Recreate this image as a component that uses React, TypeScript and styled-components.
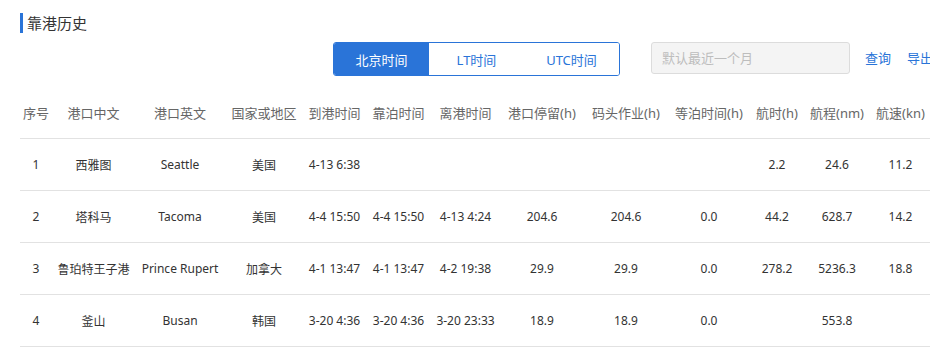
import React, { useState } from "react";
import styled, { createGlobalStyle } from "styled-components";

const Global = createGlobalStyle`
  html, body { margin: 0; padding: 0; background: #fff; overflow: hidden; }
  body { font-family: "Noto Sans", "Noto Sans CJK SC", sans-serif; color: #333; }
  * { box-sizing: border-box; }
`;

const BLUE = "#2a74d8";
const COLS = "32px 83px 90px 78px 63px 65px 69px 84px 84px 82px 54px 66px 61px";

const Page = styled.div`
  width: 933px;
  padding: 13px 0 0 20px;
`;

const TitleRow = styled.div`
  display: flex;
  align-items: center;
  gap: 4px;
  height: 20px;
`;

const TitleBar = styled.span`
  width: 3px;
  height: 20px;
  background: ${BLUE};
`;

const TitleText = styled.h2`
  margin: 0;
  font-size: 15px;
  font-weight: 400;
  color: #333;
  line-height: 20px;
`;

const Toolbar = styled.div`
  margin-top: 9px;
  display: flex;
  justify-content: flex-end;
  align-items: flex-start;
  height: 34px;
`;

const Toggle = styled.div`
  display: flex;
  width: 287px;
  height: 34px;
  border: 1px solid ${BLUE};
  border-radius: 3px;
  overflow: hidden;
  margin-right: 31px;
`;

const ToggleBtn = styled.button<{ $active: boolean }>`
  flex: 1;
  border: none;
  margin: 0;
  padding: 0;
  font-family: inherit;
  font-size: 13px;
  cursor: pointer;
  background: ${(p) => (p.$active ? BLUE : "#fff")};
  color: ${(p) => (p.$active ? "#fff" : BLUE)};
`;

const DateInput = styled.input`
  width: 199px;
  height: 32px;
  border: 1px solid #dcdcdc;
  border-radius: 3px;
  background: #f4f4f4;
  padding: 0 10px;
  font-family: inherit;
  font-size: 13px;
  color: #333;
  margin-right: 15px;
  outline: none;
  &::placeholder { color: #bdbdbd; }
`;

const LinkBtn = styled.a`
  font-size: 13px;
  color: ${BLUE};
  line-height: 32px;
  cursor: pointer;
  text-decoration: none;
  white-space: nowrap;
  & + & { margin-left: 16px; }
`;

const Table = styled.div`
  margin-top: 11px;
  width: 911px;
`;

const HeadRow = styled.div`
  display: grid;
  grid-template-columns: ${COLS};
  height: 52px;
  align-items: center;
  border-bottom: 1px solid #e2e2e2;
`;

const HeadCell = styled.div`
  text-align: center;
  font-size: 13px;
  color: #666;
  white-space: nowrap;
`;

const Row = styled.div`
  display: grid;
  grid-template-columns: ${COLS};
  height: 52px;
  align-items: center;
  border-bottom: 1px solid #e2e2e2;
`;

const Cell = styled.div`
  text-align: center;
  font-size: 12px;
  color: #333;
  white-space: nowrap;
`;

const headers = [
  "序号", "港口中文", "港口英文", "国家或地区", "到港时间", "靠泊时间", "离港时间",
  "港口停留(h)", "码头作业(h)", "等泊时间(h)", "航时(h)", "航程(nm)", "航速(kn)",
];

const rows: string[][] = [
  ["1", "西雅图", "Seattle", "美国", "4-13 6:38", "", "", "", "", "", "2.2", "24.6", "11.2"],
  ["2", "塔科马", "Tacoma", "美国", "4-4 15:50", "4-4 15:50", "4-13 4:24", "204.6", "204.6", "0.0", "44.2", "628.7", "14.2"],
  ["3", "鲁珀特王子港", "Prince Rupert", "加拿大", "4-1 13:47", "4-1 13:47", "4-2 19:38", "29.9", "29.9", "0.0", "278.2", "5236.3", "18.8"],
  ["4", "釜山", "Busan", "韩国", "3-20 4:36", "3-20 4:36", "3-20 23:33", "18.9", "18.9", "0.0", "", "553.8", ""],
];

const modes = ["北京时间", "LT时间", "UTC时间"];

export default function App() {
  const [mode, setMode] = useState(0);
  return (
    <Page>
      <Global />
      <TitleRow>
        <TitleBar />
        <TitleText>靠港历史</TitleText>
      </TitleRow>
      <Toolbar>
        <Toggle>
          {modes.map((m, i) => (
            <ToggleBtn key={m} $active={mode === i} onClick={() => setMode(i)}>
              {m}
            </ToggleBtn>
          ))}
        </Toggle>
        <DateInput placeholder="默认最近一个月" />
        <LinkBtn>查询</LinkBtn>
        <LinkBtn>导出</LinkBtn>
      </Toolbar>
      <Table>
        <HeadRow>
          {headers.map((h) => (
            <HeadCell key={h}>{h}</HeadCell>
          ))}
        </HeadRow>
        {rows.map((r) => (
          <Row key={r[0]}>
            {r.map((c, i) => (
              <Cell key={i}>{c}</Cell>
            ))}
          </Row>
        ))}
      </Table>
    </Page>
  );
}
